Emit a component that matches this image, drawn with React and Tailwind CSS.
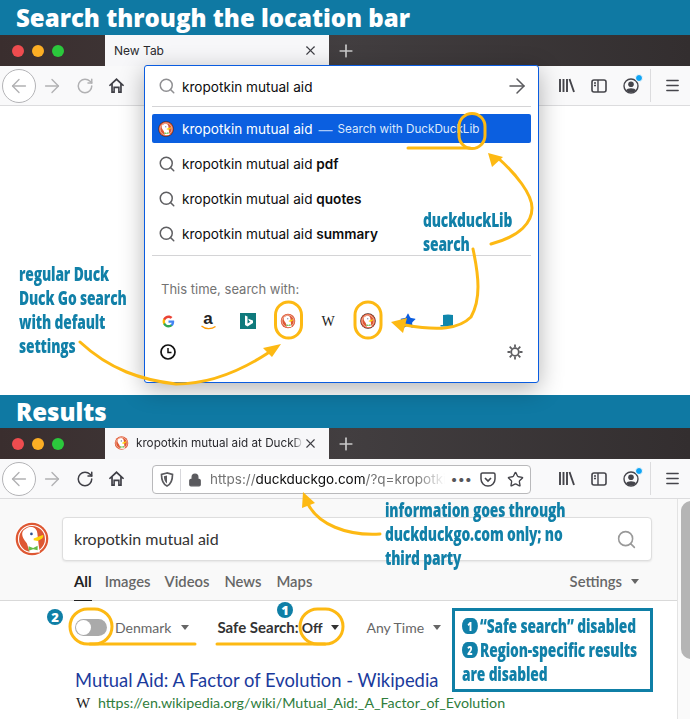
import { ArrowLeft, ArrowRight, RotateCw, Search, X, Plus, Lock, Star, Menu } from 'lucide-react'

const UI_FONT = 'font-["Inter","Liberation_Sans",sans-serif]'
const DDG_FONT = 'font-["Lato","Open_Sans",sans-serif]'
const NOTE = 'font-["Open_Sans",sans-serif] font-extrabold text-[#1180a8] text-[20px] leading-[24px] whitespace-nowrap tracking-[-0.2px] origin-left scale-x-[0.69]'

function Duck({ size = 16, dark = false }) {
  return (
    <svg width={size} height={size} viewBox="0 0 32 32">
      <circle cx="16" cy="16" r="15.500" fill={dark ? '#3b2b2b' : '#fff'} />
      <circle cx="16" cy="16" r="14.500" fill="#de5833" />
      <circle cx="16" cy="16" r="12" fill="none" stroke="#fff" strokeWidth="1" />
      <path d="M7.500 10c2-4 8-6 11-3.500 1.500 1 2.500 3.500 2.500 6.500l1 9 1 6h-9l-2.500-8C9 16.500 6.500 13.500 7.500 10z" fill="#fff" />
      <circle cx="15.500" cy="11.500" r="1.200" fill="#2d4f8e" />
      <path d="M17.500 15.500l8-3c1.200.6 0 3-1.200 3.600l-3.300 1.600-3.500-.6z" fill="#fdd20a" />
      <path d="M17 25l-4 1.500v-4l4 1.500 4-2v4z" fill="#65bc46" />
    </svg>
  )
}

function Home({ cls = 'text-[#3f3f46]' }) {
  return (
    <svg width="17" height="17" viewBox="0 0 16 16" className={cls}>
      <path d="M8 1 .8 7.800l1 1L3 7.700V15h3.500v-4.500h3V15H13V7.700l1.200 1.100 1-1z" fill="currentColor" />
      <path d="M4.600 6.400 8 3.200l3.400 3.200v7.100h-.4V9H5v4.500h-.4z" fill="#f9f9fa" />
    </svg>
  )
}

function Gear() {
  return (
    <svg width="16" height="16" viewBox="0 0 16 16" fill="none" stroke="#5f5f62">
      <circle cx="8" cy="8" r="3.800" strokeWidth="1.800" />
      <path d="M8 .5v3M8 12.500v3M.5 8h3M12.500 8h3M2.700 2.700l2.100 2.100M11.200 11.200l2.100 2.100M2.700 13.300l2.100-2.100M11.200 4.800l2.100-2.100" strokeWidth="1.800" />
    </svg>
  )
}

function ToolbarRight() {
  return (
    <div className="flex items-center h-full text-[#45454b]">
      <svg width="16" height="15" viewBox="0 0 16 15">
        <path d="M1 1v13M4.500 1v13M8 1v13M10.500 1l4.500 13" stroke="currentColor" strokeWidth="1.900" fill="none" />
      </svg>
      <svg width="16" height="14" viewBox="0 0 16 14" className="ml-[16px]">
        <path d="M7 1h7c.6 0 1 .4 1 1v10c0 .6-.4 1-1 1H7z" fill="#f9f9fa" />
        <rect x="1" y="1" width="14" height="12" rx="2" fill="none" stroke="currentColor" strokeWidth="1.600" />
        <path d="M7 1v12M3 4h2M3 6.500h2" stroke="currentColor" strokeWidth="1.400" />
      </svg>
      <div className="relative ml-[16px] w-[16px] h-[16px]">
        <svg width="16" height="16" viewBox="0 0 16 16">
          <circle cx="8" cy="8" r="7" fill="none" stroke="currentColor" strokeWidth="1.400" />
          <circle cx="8" cy="6.300" r="2.800" fill="currentColor" />
          <path d="M3 12.500c1-3 9-3 10 0-2 2.500-8 2.500-10 0z" fill="currentColor" />
        </svg>
        <span className="absolute -top-[4px] -right-[4px] w-[8px] h-[8px] rounded-full bg-[#0fa5f5] border border-[#f9f9fa]" />
      </div>
      <div className="w-px h-[33px] bg-[#dcdcde] ml-[11px]" />
      <Menu size={17} strokeWidth={2} className="ml-[13px] mr-[9px]" />
    </div>
  )
}

function TabBar({ children }) {
  return (
    <div className={`h-[31px] flex bg-gradient-to-r from-[#3a2e2e] via-[#423e40] to-[#332e2f] ${UI_FONT}`}>
      <div className="w-[105px] flex items-center gap-[8px] pl-[12px]">
        <span className="w-[12px] h-[12px] rounded-full bg-[#ee4c4f]" />
        <span className="w-[12px] h-[12px] rounded-full bg-[#fcae24]" />
        <span className="w-[12px] h-[12px] rounded-full bg-[#2bc83c]" />
      </div>
      <div className="w-[224px] bg-[#f7f7f9] flex items-center pl-[9px] pr-[11px]">
        <div className="flex-1 min-w-0 flex items-center">{children}</div>
        <X size={15} strokeWidth={1.800} className="text-[#3f3f46] shrink-0" />
      </div>
      <div className="flex items-center pl-[7px]">
        <Plus size={20} strokeWidth={2} className="text-[#c9c9c9]" />
      </div>
    </div>
  )
}

function Toolbar({ reload, children }) {
  return (
    <div className="h-[40px] flex items-center justify-between bg-[#f9f9fa] border-b border-[#dcdcde] shrink-0">
      <div className="flex items-center flex-1 min-w-0">
        <div className="ml-[2px] w-[34px] h-[34px] rounded-full border border-[#b4b4b7] bg-white flex items-center justify-center">
          <ArrowLeft size={22} strokeWidth={1.500} className="text-[#b1b1b3]" />
        </div>
        <ArrowRight size={22} strokeWidth={1.500} className="text-[#b1b1b3] ml-[5px]" />
        <RotateCw size={18} strokeWidth={2} className={`ml-[13px] ${reload}`} />
        <div className="ml-[14px]"><Home /></div>
        {children}
      </div>
      <div className="ml-[28px] h-full"><ToolbarRight /></div>
    </div>
  )
}

function Banner({ title, h }) {
  return (
    <div className={`${h} bg-[#0f79a3] flex items-center pl-[16px] text-white font-["Open_Sans",sans-serif] font-extrabold text-[24px] leading-none shrink-0`}>
      {title}
    </div>
  )
}

function Suggest({ bold }) {
  return (
    <div className="h-[35px] flex items-center pl-[6px] text-[13.600px] text-[#0c0c0d]">
      <Search size={18} strokeWidth={2} className="text-[#5f5f62]" />
      <span className="ml-[6px] mt-[2px]">kropotkin mutual aid <b className="font-semibold">{bold}</b></span>
    </div>
  )
}

function GoogleIcon() {
  return (
    <svg width="13" height="13" viewBox="0 0 48 48">
      <path d="M45 24.500c0-1.600-.1-3-.4-4.500H24v8.500h11.800c-.5 2.700-2 5-4.400 6.600v5.500h7.100C42.700 36.700 45 31.100 45 24.500z" fill="#4285f4" />
      <path d="M24 46c5.900 0 10.900-2 14.500-5.300l-7.100-5.500c-2 1.300-4.500 2.100-7.400 2.100-5.700 0-10.500-3.800-12.200-9H4.500v5.700C8.100 41.100 15.500 46 24 46z" fill="#34a853" />
      <path d="M11.800 28.300c-.9-2.700-.9-5.900 0-8.600V14H4.500C1.500 20 1.500 28 4.500 34z" fill="#fbbc05" />
      <path d="M24 10.700c3.200 0 6.100 1.100 8.400 3.300l6.300-6.300C34.900 4.200 29.900 2 24 2 15.500 2 8.100 6.900 4.500 14l7.300 5.700c1.700-5.200 6.500-9 12.200-9z" fill="#ea4335" />
    </svg>
  )
}

function Engines() {
  return (
    <div className="mt-[8px] -ml-[3px] h-[32px] flex items-center">
      <div className="w-[40px] flex justify-center -ml-[1px]"><GoogleIcon /></div>
      <div className="w-[40px] flex flex-col items-center">
        <span className="font-['Liberation_Sans',sans-serif] font-bold text-[17px] leading-[12px] text-[#222]">a</span>
        <svg width="15" height="5" viewBox="0 0 15 5"><path d="M.5 1c4 3.500 10 3.500 14 .5" stroke="#f90" strokeWidth="1.300" fill="none" /></svg>
      </div>
      <div className="w-[40px] flex justify-center">
        <svg width="16" height="16" viewBox="0 0 16 16">
          <rect width="16" height="16" fill="#0f7a7c" />
          <path d="M5 2.500l2.500.9v7l3-1.700-1.400-.7-.9-2.200 4.800 1.700v2.500L7.500 13.500 5 12z" fill="#fff" />
        </svg>
      </div>
      <div className="w-[40px] flex justify-center"><Duck size={16} /></div>
      <div className="w-[40px] flex justify-center font-['Liberation_Serif',serif] text-[14px] text-[#222]">W</div>
      <div className="w-[40px] flex justify-center"><Duck size={16} dark /></div>
      <div className="w-[40px] flex justify-center">
        <Star size={18} fill="#0a5ce0" strokeWidth={0} />
      </div>
      <div className="w-[40px] flex justify-center">
        <svg width="16" height="14" viewBox="0 0 16 14">
          <path d="M3 1c3-.8 7-.8 10 0v10H3zM.5 11h15v1.500H.5z" fill="#0f86ab" />
        </svg>
      </div>
    </div>
  )
}

function LocationPanel() {
  return (
    <div className={`absolute left-[144px] top-[65px] w-[395px] h-[318px] bg-white border border-[#0a5ce0] rounded-[3px] shadow-[0_6px_24px_rgba(0,0,0,0.3)] px-[7px] ${UI_FONT}`}>
      <div className="h-[41px] flex items-center justify-between border-b border-[#d4d4d6] pl-[6px] pr-[2px]">
        <div className="flex items-center text-[13.600px] text-[#0c0c0d]">
          <Search size={18} strokeWidth={2} className="text-[#8f8f92]" />
          <span className="ml-[6px] mt-[2px]">kropotkin mutual aid</span>
        </div>
        <ArrowRight size={24} strokeWidth={1.500} className="text-[#5a5a5e]" />
      </div>
      <div className="mt-[7px] h-[29px] bg-[#0b5fe0] rounded-[2px] flex items-center pl-[6px] text-white">
        <Duck size={16} dark />
        <span className="ml-[8px] mt-[2px] text-[13.600px]">kropotkin mutual aid</span>
        <span className="ml-[6px] mt-[2px] text-[14px] text-[#a9c8f7]">—</span>
        <span className="ml-[5px] mt-[2px] text-[11.700px] text-[#dbe8fc]">Search with DuckDuckLib</span>
      </div>
      <div className="mt-[3px]">
        <Suggest bold="pdf" />
        <Suggest bold="quotes" />
        <Suggest bold="summary" />
      </div>
      <div className="mt-[4px] border-t border-[#d4d4d6] pt-[25px] pl-[9px] text-[13px] leading-[16px] text-[#737373]">This time, search with:</div>
      <Engines />
      <div className="-mt-[1px] h-[32px] flex items-center justify-between pl-[8px] pr-[8px]">
        <svg width="16" height="16" viewBox="0 0 16 16" className="text-[#111]">
          <circle cx="8" cy="8" r="7" fill="none" stroke="currentColor" strokeWidth="1.700" />
          <path d="M8 4v4.500h3.500" fill="none" stroke="currentColor" strokeWidth="1.500" />
        </svg>
        <Gear />
      </div>
    </div>
  )
}

function Caret({ cls = 'text-[#666]' }) {
  return <span className={`inline-block w-0 h-0 border-x-[4px] border-x-transparent border-t-[5px] border-t-current ${cls}`} />
}

function UrlBar() {
  return (
    <div className={`absolute left-[152px] top-[6px] w-[379px] h-[29px] bg-white border border-[#b9b9bb] rounded-[4px] flex items-center ${UI_FONT}`}>
      <svg width="14" height="15" viewBox="0 0 14 15" className="ml-[7px] text-[#5a5a5e]">
        <path d="M7 1 1.500 2.500c0 5 1 9.500 5.500 11.500 4.500-2 5.500-6.500 5.500-11.500z" fill="none" stroke="currentColor" strokeWidth="1.700" />
        <path d="M7 3.500v8C4.500 10 4 7 3.900 4.300z" fill="currentColor" />
      </svg>
      <div className="w-px h-[22px] bg-[#d7d7db] ml-[6px]" />
      <Lock size={14} fill="#5a5a5e" strokeWidth={2} className="text-[#5a5a5e] ml-[7px]" />
      <div className="ml-[8px] w-[235px] whitespace-nowrap text-[13.500px] text-[#737373] [mask-image:linear-gradient(to_right,black_88%,transparent)]">
        https://<span className="text-[#0c0c0d]">duckduckgo.com</span>/?q=kropotki
      </div>
      <span className="ml-[6px] text-[#55555a] font-bold text-[13px] tracking-[1px] leading-none">•••</span>
      <svg width="16" height="15" viewBox="0 0 16 15" className="ml-[7px] text-[#45454b]">
        <path d="M2.500 1h11c.8 0 1.500.6 1.500 1.400V7c0 3.800-3.100 7-7 7s-7-3.200-7-7V2.400C1 1.600 1.700 1 2.500 1z" fill="none" stroke="currentColor" strokeWidth="1.500" />
        <path d="M5 6l3 3 3-3" fill="none" stroke="currentColor" strokeWidth="1.700" />
      </svg>
      <Star size={17} strokeWidth={1.900} className="text-[#45454b] ml-[11px]" />
    </div>
  )
}

function DdgPage() {
  return (
    <div className={`flex-1 flex bg-white min-h-0 ${DDG_FONT}`}>
      <div className="flex-1 min-w-0">
        <div className="h-[102px] bg-[#f9f9f9] border-b border-[#d9d9d9] relative pt-[18px]">
          <div className="flex items-center pl-[14px]">
            <Duck size={36} />
            <div className="ml-[12px] w-[590px] h-[44px] bg-white border border-[#dedede] rounded-[4px] shadow-[0_1px_2px_rgba(0,0,0,0.08)] flex items-center justify-between pl-[11px] pr-[14px] text-[16px] text-[#333]">
              kropotkin mutual aid
              <Search size={21} strokeWidth={1.800} className="text-[#999]" />
            </div>
          </div>
          <div className="absolute left-[74px] right-[38px] bottom-0 h-[37px] flex items-center text-[14.800px] text-[#666] font-semibold">
            <div className="h-full flex items-center text-[#222] font-bold border-b border-[#222] -mb-px">All</div>
            <span className="ml-[13px]">Images</span>
            <span className="ml-[14px]">Videos</span>
            <span className="ml-[15px]">News</span>
            <span className="ml-[15px]">Maps</span>
            <span className="ml-auto flex items-center gap-[9px]">Settings <Caret /></span>
          </div>
        </div>
        <div className="h-[52px] flex items-center pl-[75px] text-[14px] text-[#666]">
          <div className="w-[32px] h-[17px] rounded-full bg-[#aaaaaa] relative shrink-0">
            <span className="absolute left-[1px] top-[1px] w-[15px] h-[15px] rounded-full bg-white" />
          </div>
          <span className="ml-[8px]">Denmark</span>
          <span className="ml-[10px] flex"><Caret /></span>
          <span className="ml-[28px] font-bold text-[15px] text-[#333]">Safe Search:</span>
          <span className="ml-[3px] font-bold text-[14px] text-[#333]">Off</span>
          <span className="ml-[9px] flex"><Caret cls="text-[#333]" /></span>
          <span className="ml-[27px]">Any Time</span>
          <span className="ml-[9px] flex"><Caret /></span>
        </div>
        <div className="pl-[75px] mt-[15px] text-[18.400px] leading-[24px] text-[#1a3a9c] whitespace-nowrap">Mutual Aid: A Factor of Evolution - Wikipedia</div>
        <div className="pl-[76px] mt-[1px] flex items-center text-[14.250px] leading-[20px] text-[#2f7d3c] whitespace-nowrap">
          <span className="font-['Liberation_Serif',serif] text-[#222] text-[15px] w-[22px]">W</span>
          https://en.wikipedia.org/wiki/Mutual_Aid:_A_Factor_of_Evolution
        </div>
      </div>
      <div className="w-[13px] border-l border-[#e3e3e3] bg-[#fafafa] pt-[2px] pl-[3px] shrink-0">
        <div className="w-[10px] h-[158px] rounded-l-full bg-[#b5b5b5]" />
      </div>
    </div>
  )
}

function Bubble({ n, cls }) {
  return (
    <span className={`absolute w-[16px] h-[16px] rounded-full bg-[#0f7fa6] text-white font-["Open_Sans",sans-serif] font-extrabold text-[13px] leading-[16px] text-center ${cls}`}>{n}</span>
  )
}

function Annotations() {
  const y = '#fdb913'
  return (
    <>
      <svg className="absolute inset-0 pointer-events-none" width="690" height="719" viewBox="0 0 690 719" fill="none" stroke={y} strokeWidth="3" strokeLinecap="round">
        {/* rings and underlines */}
        <path d="M408 148h62" />
        <rect x="459" y="113.500" width="26" height="35" rx="13" />
        <rect x="275.500" y="302" width="26" height="36" rx="13" />
        <rect x="355" y="302" width="26" height="36" rx="13" />
        <path d="M90 644h105" />
        <rect x="70" y="609" width="42" height="35" rx="17.500" />
        <path d="M217 644h108" />
        <rect x="300" y="609" width="43" height="35" rx="17.500" />
        {/* arrows */}
        <path d="M80 342c30 28 62 38 96 42 36 0 66-14 92-31" />
        <path d="M491 244c30-8 41-22 41-36 0-14-16-34-34-50" />
        <path d="M473 249c6 28 8 50-2 68-12 12-32 14-66 8" />
        <path d="M380 534c-34 2-62-10-72-30" />
        <path d="M281 344l-18 4 9 9zM488 153l15 4-11 10zM391 322l16-4-4 15zM303 492l12 11-13 5z" fill={y} stroke="none" />
      </svg>

      <div className={`absolute left-[19px] top-[262px] ${NOTE}`}>
        <div>regular Duck</div>
        <div>Duck Go search</div>
        <div>with default</div>
        <div>settings</div>
      </div>
      <div className={`absolute left-[423px] top-[208px] ${NOTE}`}>
        <div>duckduckLib</div>
        <div>search</div>
      </div>
      <div className={`absolute left-[385px] top-[498px] ${NOTE}`}>
        <div>information goes through</div>
        <div>duckduckgo.com only; no</div>
        <div>third party</div>
      </div>
      <Bubble n="2" cls="left-[47px] top-[609px]" />
      <Bubble n="1" cls="left-[277px] top-[602px]" />
      <div className="absolute left-[452px] top-[608px] w-[201px] h-[84px] bg-white border-[3px] border-[#0f7fa6] pl-[7px] pt-[3px] overflow-hidden">
        <div className={NOTE}>
          <div className="flex items-center">
            <span className="w-[23px] h-[16px] mr-[3px] shrink-0 rounded-full bg-[#1180a8] text-white text-[13px] leading-[16px] text-center">1</span>
            “Safe search” disabled
          </div>
          <div className="flex items-center">
            <span className="w-[23px] h-[16px] mr-[3px] shrink-0 rounded-full bg-[#1180a8] text-white text-[13px] leading-[16px] text-center">2</span>
            Region-specific results
          </div>
          <div>are disabled</div>
        </div>
      </div>
    </>
  )
}

export default function App() {
  return (
    <div className="relative w-[690px] h-[719px] overflow-hidden bg-white flex flex-col">
      <div className="h-[395px] flex flex-col shrink-0">
        <Banner title="Search through the location bar" h="h-[35px]" />
        <TabBar>
          <span className="text-[12px] text-[#2a2a2e]">New Tab</span>
        </TabBar>
        <Toolbar reload="text-[#b1b1b3]" />
      </div>
      <LocationPanel />
      <div className="flex-1 flex flex-col min-h-0">
        <Banner title="Results" h="h-[33px]" />
        <TabBar>
          <Duck size={16} />
          <span className="ml-[7px] w-[167px] whitespace-nowrap text-[11.700px] text-[#2a2a2e] [mask-image:linear-gradient(to_right,black_94%,transparent)]">kropotkin mutual aid at DuckDu</span>
        </TabBar>
        <div className="relative">
          <Toolbar reload="text-[#3f3f46]" />
          <UrlBar />
        </div>
        <DdgPage />
      </div>
      <Annotations />
    </div>
  )
}
